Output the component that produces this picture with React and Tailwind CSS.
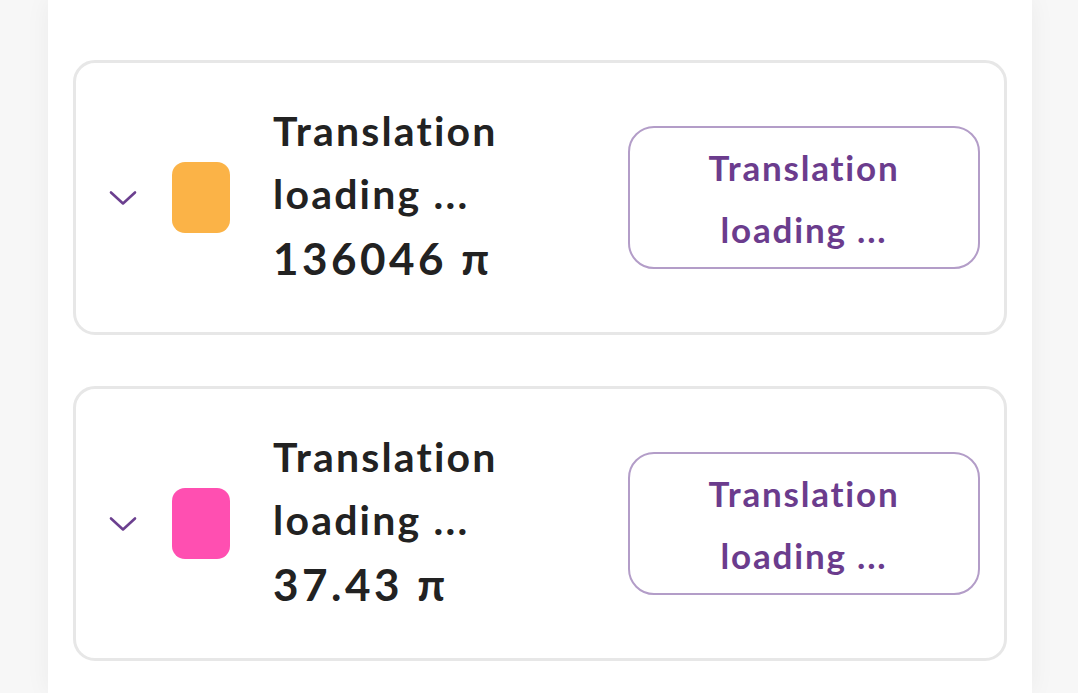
import React from 'react';

const assets = [
  { id: 1, color: 'bg-[#fbb347]', amount: '136046 π' },
  { id: 2, color: 'bg-[#ff4fb1]', amount: '37.43 π' }
];

function Chevron() {
  return (
    <svg width="28" height="16" viewBox="0 0 28 16" fill="none" className="shrink-0">
      <path d="M2 2.5 L14 13.5 L26 2.5" stroke="#6b3f8f" strokeWidth="2.6" strokeLinecap="round" strokeLinejoin="round" />
    </svg>
  );
}

function AssetCard({ asset }) {
  return (
    <div className="flex items-center h-[275px] border-[3px] border-[#e7e7e7] rounded-[22px] bg-white pl-[33px] pr-[24px]">
      <Chevron />
      <div className={`ml-[35px] w-[58px] h-[71px] rounded-[13px] shrink-0 ${asset.color}`} />
      <div className="ml-[43px] w-[260px] font-bold text-[#222222] text-[41px] leading-[63px] tracking-[2.2px] -mt-[6px]">
        <div>Translation loading ...</div>
        <div className="text-[44px] tracking-[3.5px] leading-[66px]">{asset.amount}</div>
      </div>
      <button className="ml-auto w-[352px] h-[143px] rounded-[26px] border-[2.5px] border-[#b39dc8] text-[#6b3c8d] font-bold text-[35px] leading-[62px] tracking-[1.8px] px-[70px]">
        Translation loading ...
      </button>
    </div>
  );
}

export default function App() {
  return (
    <div className="min-h-screen bg-[#f7f7f7] font-['Lato','Noto_Sans',sans-serif] overflow-hidden">
      <div className="mx-[48px] w-[984px] min-h-[693px] bg-white shadow-[0_0_24px_rgba(0,0,0,0.05)] px-[25px] pt-[60px] flex flex-col gap-[51px]">
        {assets.map(asset => (
          <AssetCard key={asset.id} asset={asset} />
        ))}
      </div>
    </div>
  );
}
